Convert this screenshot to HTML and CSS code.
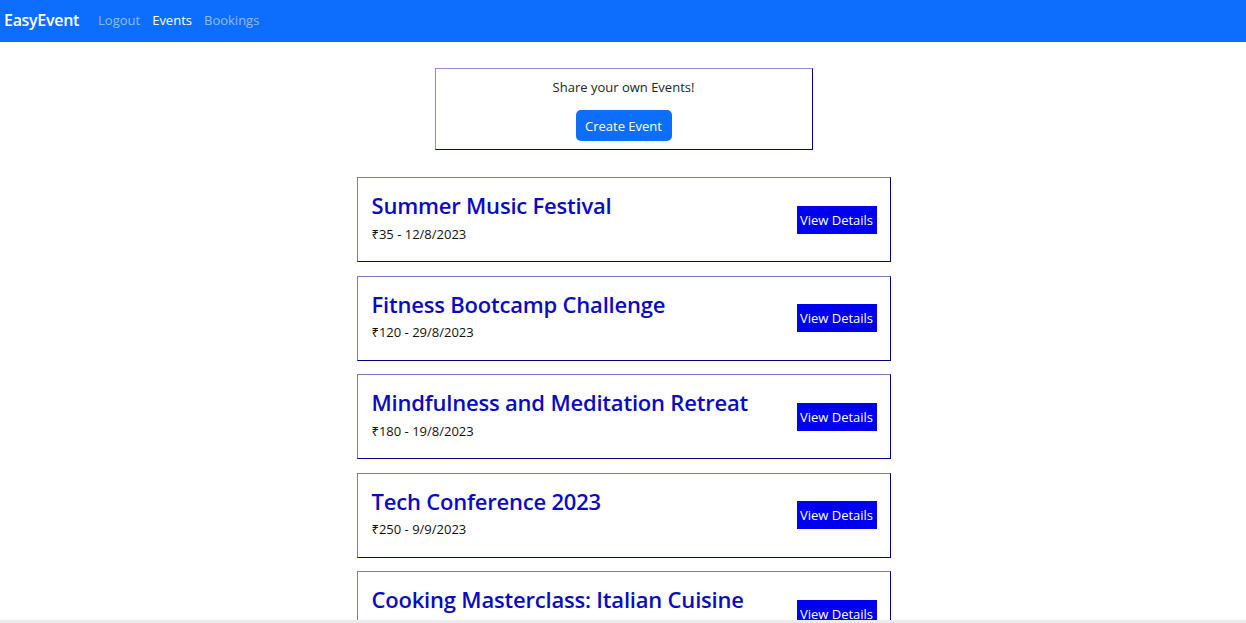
FILE: index.html
```html
<!DOCTYPE html>
<html lang="en">
<head>
<meta charset="utf-8">
<title>EasyEvent</title>
<link rel="stylesheet" href="styles.css">
</head>
<body>
<header class="navbar">
  <a class="brand" href="#">EasyEvent</a>
  <nav class="nav-links">
    <a class="nav-link" href="#">Logout</a>
    <a class="nav-link active" href="#">Events</a>
    <a class="nav-link" href="#">Bookings</a>
  </nav>
</header>
<main class="main">
  <section class="create-box">
    <p class="create-text">Share your own Events!</p>
    <button class="btn-create">Create Event</button>
  </section>
  <ul class="event-list">
    <li class="event-card">
      <div class="event-info">
        <h2 class="event-title">Summer Music Festival</h2>
        <p class="event-meta">₹35 - 12/8/2023</p>
      </div>
      <button class="btn-details">View Details</button>
    </li>
    <li class="event-card">
      <div class="event-info">
        <h2 class="event-title">Fitness Bootcamp Challenge</h2>
        <p class="event-meta">₹120 - 29/8/2023</p>
      </div>
      <button class="btn-details">View Details</button>
    </li>
    <li class="event-card">
      <div class="event-info">
        <h2 class="event-title">Mindfulness and Meditation Retreat</h2>
        <p class="event-meta">₹180 - 19/8/2023</p>
      </div>
      <button class="btn-details">View Details</button>
    </li>
    <li class="event-card">
      <div class="event-info">
        <h2 class="event-title">Tech Conference 2023</h2>
        <p class="event-meta">₹250 - 9/9/2023</p>
      </div>
      <button class="btn-details">View Details</button>
    </li>
    <li class="event-card">
      <div class="event-info">
        <h2 class="event-title">Cooking Masterclass: Italian Cuisine</h2>
        <p class="event-meta">₹300 - 1/9/2023</p>
      </div>
      <button class="btn-details">View Details</button>
    </li>
  </ul>
</main>
<div class="scroll-edge"></div>
</body>
</html>
```
FILE: styles.css
```css
* { box-sizing: border-box; }
html, body { margin: 0; padding: 0; }
body {
  font-family: "Open Sans", "Noto Sans", sans-serif;
  color: #212529;
  background: #fff;
  font-size: 14px;
}
.navbar {
  height: 42px;
  background: #0d6efd;
  display: flex;
  align-items: center;
  padding: 0 4px 2px;
}
.brand {
  color: #fff;
  font-weight: 600;
  font-size: 16px;
  text-decoration: none;
  margin-right: 19px;
  letter-spacing: -0.3px;
}
.nav-links { display: flex; gap: 12px; }
.nav-link {
  color: rgba(255,255,255,0.55);
  text-decoration: none;
  font-size: 13px;
}
.nav-link.active { color: #fff; }
.main {
  display: flex;
  flex-direction: column;
  align-items: center;
  padding: 26px 0 0 1px;
}
.create-box {
  width: 378px;
  height: 82px;
  border: 1px solid #000080;
  border-top-color: #8c8cd0;
  border-left-color: #8c8cd0;
  display: flex;
  flex-direction: column;
  align-items: center;
  padding-top: 9px;
}
.create-text { margin: 0 0 14px; font-size: 13px; }
.btn-create {
  background: #0d6efd;
  color: #fff;
  border: 0;
  border-radius: 5px;
  font-family: inherit;
  font-size: 13px;
  width: 96px;
  height: 31px;
  padding: 0;
}
.event-list {
  list-style: none;
  margin: 27px 0 0;
  padding: 0;
  display: flex;
  flex-direction: column;
  gap: 13.5px;
}
.event-card {
  width: 534px;
  height: 85px;
  border: 1px solid #000080;
  border-top-color: #7a7ac0;
  border-left-color: #7a7ac0;
  display: flex;
  align-items: center;
  justify-content: space-between;
  padding: 0 13px 4px 14px;
}
.event-title {
  margin: 0;
  font-size: 22px;
  font-weight: 600;
  color: #0a0ac0;
  line-height: 1.2;
  letter-spacing: -0.2px;
}
.event-meta { margin: 6px 0 0; font-size: 13px; color: #111; }
.btn-details {
  background: #0000f0;
  color: #fff;
  border: 0;
  font-family: inherit;
  font-size: 13px;
  width: 80px;
  height: 28px;
  padding: 0;
  margin-top: 4px;
}
.scroll-edge {
  position: fixed;
  left: 0; right: 0; bottom: 0;
  height: 3px;
  background: #ebebeb;
}
```
